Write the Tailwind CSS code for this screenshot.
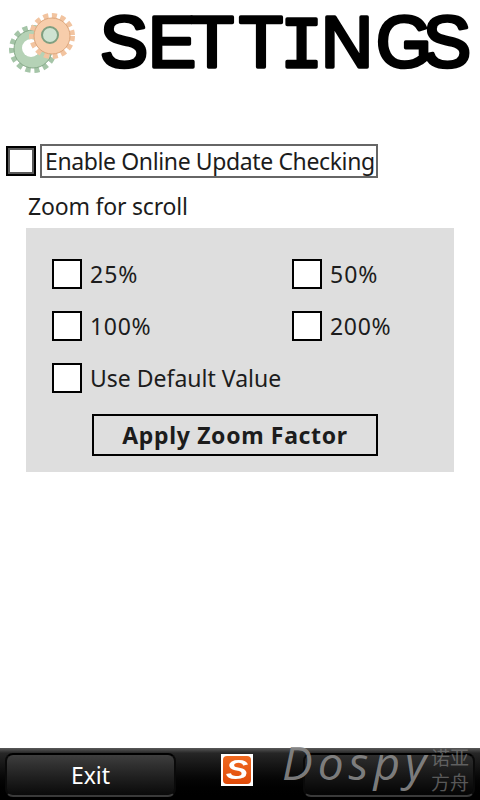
<!DOCTYPE html>
<html lang="en">

<head>
    <meta charset="UTF-8">
    <meta name="viewport" content="width=device-width, initial-scale=1.0">
    <title>Settings</title>
    <script src="https://cdn.jsdelivr.net/npm/@tailwindcss/browser@4"></script>
</head>

<body class="bg-white">
    <div class="relative w-[480px] h-[800px] flex flex-col overflow-hidden bg-white text-[#1c1c1c] font-['Noto_Sans',sans-serif] text-[23px]">

        <!-- Header -->
        <header class="h-[144px] flex items-start">
            <svg class="w-[480px] h-[90px] shrink-0" viewBox="0 0 480 90">
                <g class="blur-[0.5px]">
                    <circle cx="33" cy="49" r="21" fill="none" stroke="#a5c5a8" stroke-width="6" stroke-dasharray="5 3.8"/>
                    <circle cx="33" cy="49" r="19" fill="#b5d2b6" stroke="#86a888" stroke-width="1"/>
                    <circle cx="31" cy="48" r="9" fill="#fff"/>
                    <circle cx="52" cy="36" r="20" fill="none" stroke="#f2c4a0" stroke-width="6" stroke-dasharray="5 3.5"/>
                    <circle cx="52" cy="36" r="18" fill="#f7cdab" stroke="#dca67c" stroke-width="1"/>
                    <circle cx="50" cy="35" r="8" fill="#cfe3d2" stroke="#7f9f80" stroke-width="2"/>
                </g>
                <text y="67" x="100 148 190 239 280 321 376 423" font-family="'Liberation Sans', sans-serif" font-size="72" fill="#000" stroke="#000" stroke-width="3.5" stroke-linejoin="round" stroke-linecap="round">SETT<tspan font-family="'Liberation Mono', monospace">I</tspan>NGS</text>
            </svg>
        </header>

        <!-- Update checking -->
        <div class="flex items-center pl-1.5 h-[34px]">
            <span class="w-[30px] h-[30px] border-2 border-black bg-white shadow-[inset_0_0_0_2px_#5a5a5a]"></span>
            <span class="ml-1 w-[338px] h-[34px] border-2 border-[#666] flex items-center pl-[3px] whitespace-nowrap tracking-[-0.38px]">Enable Online Update Checking</span>
        </div>

        <p class="ml-7 mt-[12px] h-[32px] leading-[32px] tracking-[-0.2px]">Zoom for scroll</p>

        <!-- Zoom panel -->
        <section class="ml-[26px] mt-[6px] w-[428px] h-[244px] bg-[#dedede] pt-[31px] pl-[26px] leading-[30px]">
            <div class="grid grid-cols-[240px_1fr] gap-y-[22px]">
                <label class="flex items-center gap-2 tracking-[1px]"><span class="w-[30px] h-[30px] border-2 border-black bg-white"></span>25%</label>
                <label class="flex items-center gap-2 tracking-[1px]"><span class="w-[30px] h-[30px] border-2 border-black bg-white"></span>50%</label>
                <label class="flex items-center gap-2 tracking-[0.7px]"><span class="w-[30px] h-[30px] border-2 border-black bg-white"></span>100%</label>
                <label class="flex items-center gap-2 tracking-[0.7px]"><span class="w-[30px] h-[30px] border-2 border-black bg-white"></span>200%</label>
                <label class="col-span-2 flex items-center gap-2"><span class="w-[30px] h-[30px] border-2 border-black bg-white"></span>Use Default Value</label>
            </div>
            <button type="button" class="block ml-10 mt-[21px] w-[286px] h-[42px] border-2 border-black font-bold tracking-[0.65px]">Apply Zoom Factor</button>
        </section>

        <!-- Softkey bar -->
        <footer class="mt-auto relative h-[52px] bg-gradient-to-b from-[#5a5a5a] via-[#262626] via-[10%] to-black flex items-start justify-between pt-[5px] px-[5px]">
            <button type="button" class="w-[171px] h-[44px] rounded-lg border-2 border-t-black border-x-[#0a0a0a] border-b-[#3a3a3a] bg-gradient-to-b from-[#3e3e3e] to-[#0a0a0a] text-white leading-[36px]">Exit</button>
            <button type="button" class="w-[172px] h-[44px] rounded-lg border-2 border-t-black border-x-[#0a0a0a] border-b-[#3a3a3a] bg-gradient-to-b from-[#2e2e2e] to-[#050505]"></button>

            <span class="absolute left-[221px] top-[6px] w-8 h-8 bg-white p-[2px]">
                <span class="flex w-full h-full items-center justify-center rounded-sm bg-gradient-to-b from-[#f06a20] to-[#e04a08] text-white font-['Liberation_Sans',sans-serif] font-bold italic text-[27px] leading-none"><span class="scale-x-125">S</span></span>
            </span>
        </footer>

        <!-- Watermark sits over the softkey bar -->
        <span class="absolute left-[282px] top-[727px] font-['Open_Sans',sans-serif] italic text-[46px] leading-[70px] tracking-[5px] text-[#8a8a8a]/90 whitespace-nowrap">Dospy</span>
        <span class="absolute left-[431px] top-[744px] w-[40px] font-['Noto_Sans_CJK_SC',sans-serif] text-[19px] leading-[25px] text-[#8a8a8a]/60">诺亚方舟</span>
    </div>
</body>

</html>
